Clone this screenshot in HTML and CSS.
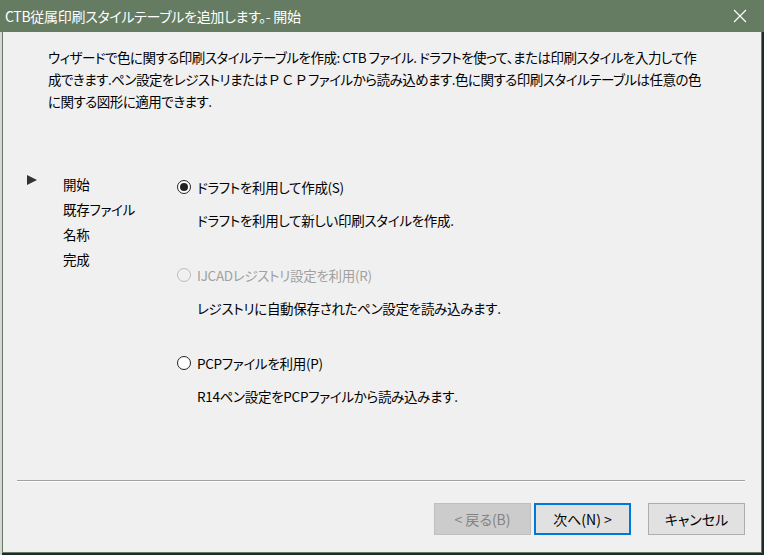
FILE: index.html
```html
<!DOCTYPE html>
<html lang="ja">
<head>
    <meta charset="UTF-8">
    <title>CTB従属印刷スタイルテーブルを追加します。- 開始</title>
    <link rel="stylesheet" href="styles.css">
</head>
<body>
    <div class="titlebar">
        <span class="title">CTB従属印刷スタイルテーブルを追加します。- 開始</span>
        <svg class="close" width="14" height="14" viewBox="0 0 14 14">
            <path d="M1 1 L13 13 M13 1 L1 13" stroke="#fff" stroke-width="1.2" fill="none"/>
        </svg>
    </div>
    <div class="dialog">
        <p class="intro">ウィザードで色に関する印刷スタイルテーブルを作成: CTB ファイル. ドラフトを使って、または印刷スタイルを入力して作<br>成できます.ペン設定をレジストリまたは<span class="wide">ＰＣＰ</span>ファイルから読み込めます.色に関する印刷スタイルテーブルは任意の色<br>に関する図形に適用できます.</p>

        <div class="main">
            <svg class="pointer" width="10" height="10" viewBox="0 0 10 10">
                <path d="M0 0 L10 5 L0 10 Z" fill="#333"/>
            </svg>
            <ul class="steps">
                <li>開始</li>
                <li>既存ファイル</li>
                <li>名称</li>
                <li>完成</li>
            </ul>
            <div class="options">
                <div class="option">
                    <label class="choice"><span class="radio checked"></span>ドラフトを利用して作成(S)</label>
                    <p class="desc">ドラフトを利用して新しい印刷スタイルを作成.</p>
                </div>
                <div class="option">
                    <label class="choice disabled"><span class="radio"></span>IJCADレジストリ設定を利用(R)</label>
                    <p class="desc">レジストリに自動保存されたペン設定を読み込みます.</p>
                </div>
                <div class="option">
                    <label class="choice"><span class="radio"></span>PCPファイルを利用(P)</label>
                    <p class="desc">R14ペン設定をPCPファイルから読み込みます.</p>
                </div>
            </div>
        </div>

        <div class="footer">
            <div class="separator"></div>
            <div class="buttons">
                <button class="btn" disabled>&lt; 戻る(B)</button>
                <button class="btn default">次へ(N) &gt;</button>
                <button class="btn cancel">キャンセル</button>
            </div>
        </div>
    </div>
</body>
</html>
```

FILE: styles.css
```css
body{
    margin: 0;
    width: 764px;
    height: 555px;
    overflow: hidden;
    background: linear-gradient(to right, #d6d6d6 2px, #1f2a2d 2px);
    font-family: "Noto Sans CJK JP", "Noto Sans", sans-serif;
    font-feature-settings: "palt";
    font-size: 13.5px;
    letter-spacing: -0.3px;
    color: #000;
}
.titlebar{
    height: 32px;
    background-color: #657b62;
    display: flex;
    align-items: center;
    justify-content: space-between;
    padding: 0 17px 0 5px;
}
.title{
    color: #fff;
    font-size: 14px;
    letter-spacing: -0.3px;
}
.close{
    display: block;
}
.dialog{
    margin-left: 2px;
    width: 758px;
    height: 520px;
    background-color: #f0f0f0;
    border: 1px solid #657b62;
    border-top: none;
    display: flex;
    flex-direction: column;
}
.intro{
    margin: 14px 0 0 0;
    padding-left: 45px;
    line-height: 22px;
    white-space: nowrap;
    letter-spacing: -0.5px;
}
.wide{
    font-feature-settings: normal;
    letter-spacing: 0;
}
.main{
    display: flex;
    margin-top: 60px;
    padding-left: 24px;
}
.pointer{
    margin-top: 3px;
    margin-right: 26px;
    flex: 0 0 10px;
}
.steps{
    list-style: none;
    margin: 0;
    padding: 0;
    width: 114px;
    flex: 0 0 114px;
}
.steps li{
    line-height: 25px;
}
.options{
    padding-top: 5px;
}
.option{
    margin-bottom: 35px;
}
.choice{
    display: flex;
    align-items: center;
    height: 20px;
    line-height: 20px;
}
.choice.disabled{
    color: #a0a0a0;
}
.radio{
    width: 12px;
    height: 12px;
    border: 1px solid #222;
    border-radius: 50%;
    background-color: #fff;
    margin-right: 6px;
    position: relative;
}
.radio.checked::after{
    content: "";
    position: absolute;
    left: 2px;
    top: 2px;
    width: 8px;
    height: 8px;
    border-radius: 50%;
    background-color: #222;
}
.choice.disabled .radio{
    border-color: #bcbcbc;
    background-color: #f0f0f0;
}
.desc{
    margin: 13px 0 0 20px;
    line-height: 20px;
}
.footer{
    margin-top: auto;
    padding: 0 16px 17px 14px;
}
.separator{
    height: 1px;
    background-color: #a0a0a0;
    border-bottom: 1px solid #fff;
}
.buttons{
    display: flex;
    justify-content: flex-end;
    margin-top: 21px;
}
.btn{
    width: 97px;
    height: 32px;
    font-family: inherit;
    font-feature-settings: "palt";
    font-size: 14px;
    background-color: #e1e1e1;
    border: 1px solid #adadad;
    color: #000;
    padding: 0;
}
.btn[disabled]{
    background-color: #cccccc;
    border-color: #bfbfbf;
    color: #838383;
}
.btn.default{
    margin-left: 3px;
    border: 2px solid #0078d7;
}
.btn.cancel{
    margin-left: 17px;
}
```
